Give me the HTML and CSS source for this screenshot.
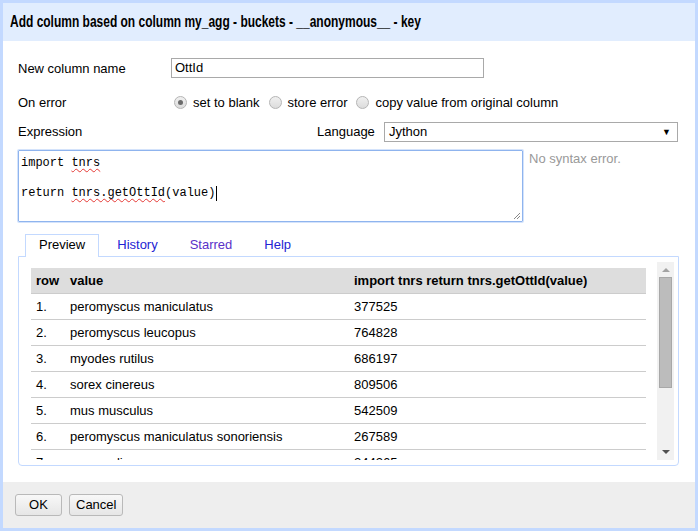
FILE: index.html
```html
<!DOCTYPE html>
<html>
<head>
<meta charset="utf-8">
<link rel="stylesheet" href="styles.css">
</head>
<body>
<div class="dialog">
  <div class="header"><span class="title">Add column based on column my_agg - buckets - __anonymous__ - key</span></div>
  <div class="body">
    <div class="row row-name">
      <div class="label">New column name</div>
      <div class="input">OttId</div>
    </div>
    <div class="row row-error">
      <div class="label">On error</div>
      <div class="radios">
        <span class="radio checked"></span><span class="rtext">set to blank</span>
        <span class="radio"></span><span class="rtext">store error</span>
        <span class="radio"></span><span class="rtext">copy value from original column</span>
      </div>
    </div>
    <div class="row row-expr">
      <div class="label">Expression</div>
      <div class="lang-label">Language</div>
      <div class="select"><span>Jython</span><span class="arrow">&#9660;</span></div>
    </div>
    <div class="row row-code">
      <div class="code">
        <div class="line">import <span class="sp">tnrs</span></div>
        <div class="line">&nbsp;</div>
        <div class="line">return <span class="sp">tnrs.getOttId</span>(value)<span class="caret"></span></div>
        <svg class="grip" width="9" height="9" viewBox="0 0 9 9"><path d="M8 2 L2 8 M8 5 L5 8" stroke="#888" stroke-width="1"/></svg>
      </div>
      <div class="status">No syntax error.</div>
    </div>
    <div class="tabs">
      <div class="tab active">Preview</div>
      <div class="tab link">History</div>
      <div class="tab visited">Starred</div>
      <div class="tab link">Help</div>
    </div>
    <div class="panel">
      <div class="scroller">
        <div class="content">
          <table class="preview">
            <thead>
              <tr><th class="c1">row</th><th class="c2">value</th><th>import tnrs return tnrs.getOttId(value)</th></tr>
            </thead>
            <tbody>
              <tr><td>1.</td><td>peromyscus maniculatus</td><td>377525</td></tr>
              <tr><td>2.</td><td>peromyscus leucopus</td><td>764828</td></tr>
              <tr><td>3.</td><td>myodes rutilus</td><td>686197</td></tr>
              <tr><td>4.</td><td>sorex cinereus</td><td>809506</td></tr>
              <tr><td>5.</td><td>mus musculus</td><td>542509</td></tr>
              <tr><td>6.</td><td>peromyscus maniculatus sonoriensis</td><td>267589</td></tr>
              <tr><td>7.</td><td>mammalia</td><td>244265</td></tr>
            </tbody>
          </table>
        </div>
        <div class="sbar">
          <div class="sarrow up"></div>
          <div class="sthumb"></div>
          <div class="sarrow down"></div>
        </div>
      </div>
    </div>
  </div>
  <div class="footer">
    <div class="btn ok">OK</div>
    <div class="btn">Cancel</div>
  </div>
</div>
</body>
</html>
```
FILE: styles.css
```css
html, body {
  margin: 0;
  padding: 0;
}
body {
  font-family: "Liberation Sans", Arial, sans-serif;
  font-size: 13px;
  color: #000;
  background: #c3d9ff;
}
.dialog {
  width: 698px;
  height: 531px;
  box-sizing: border-box;
  border: 3px solid #c3d9ff;
  background: #fff;
  display: flex;
  flex-direction: column;
}
.header {
  height: 38px;
  background: #e1edfe;
  line-height: 38px;
  padding-left: 7px;
  flex: none;
  white-space: nowrap;
}
.title {
  display: inline-block;
  font-size: 17px;
  font-weight: bold;
  transform: scaleX(0.705);
  transform-origin: 0 50%;
}
.body {
  flex: 1;
  padding: 17px 16px 0 15px;
}
.row {
  display: flex;
  align-items: center;
}
.label {
  width: 153px;
  flex: none;
}
.row-name {
  height: 20px;
}
.input {
  width: 313px;
  height: 20px;
  box-sizing: border-box;
  border: 1px solid #a9a9a9;
  padding-left: 3px;
  line-height: 18px;
}
.row-error {
  margin-top: 14px;
  height: 20px;
}
.radios {
  display: flex;
  align-items: center;
}
.radio {
  width: 11px;
  height: 11px;
  border-radius: 50%;
  border: 1px solid #b5b5b5;
  background: linear-gradient(#f0f0f0, #dcdcdc);
  margin: 0 6px 0 3px;
  display: flex;
  align-items: center;
  justify-content: center;
  box-sizing: content-box;
}
.radio.checked::after {
  content: "";
  width: 5px;
  height: 5px;
  border-radius: 50%;
  background: #6b6b6b;
}
.rtext {
  margin-right: 6px;
}
.row-expr {
  margin-top: 10px;
  height: 19px;
}
.lang-label {
  margin-left: 146px;
  width: 67px;
}
.select {
  width: 294px;
  height: 20px;
  box-sizing: border-box;
  border: 1px solid #a9a9a9;
  display: flex;
  align-items: center;
  justify-content: space-between;
  padding: 0 6px 0 4px;
}
.arrow {
  font-size: 9px;
}
.row-code {
  margin-top: 9px;
  align-items: flex-start;
}
.code {
  width: 505px;
  height: 72px;
  box-sizing: border-box;
  border: 1px solid #8fb4ee;
  box-shadow: 0 0 0 1px #d4e3fb;
  border-radius: 1px;
  padding: 5px 2px 2px;
  font-family: "Liberation Mono", "DejaVu Sans Mono", monospace;
  font-size: 12px;
  line-height: 15px;
  position: relative;
}
.sp {
  text-decoration: underline wavy #e53935;
  text-decoration-thickness: 1px;
  text-underline-offset: 2px;
}
.caret {
  display: inline-block;
  width: 1px;
  height: 15px;
  background: #000;
  vertical-align: top;
  margin-left: 1px;
}
.grip {
  position: absolute;
  right: 1px;
  bottom: 1px;
}
.status {
  margin-left: 6px;
  margin-top: 1px;
  color: #999;
}
.tabs {
  display: flex;
  margin-top: 12px;
  padding-left: 7px;
  height: 22px;
  position: relative;
  z-index: 1;
}
.tab {
  padding: 0 13px;
  margin-right: 4px;
  line-height: 20px;
  height: 22px;
  box-sizing: border-box;
  border: 1px solid transparent;
  border-bottom: none;
}
.tab.active {
  border-color: #c3d9ff;
  background: #fff;
  height: 23px;
}
.tab.link {
  color: #2323d3;
}
.tab.visited {
  color: #5a31c8;
}
.panel {
  width: 661px;
  height: 210px;
  box-sizing: border-box;
  border: 1px solid #c3d9ff;
  border-radius: 0 0 4px 4px;
  padding: 5px 4px 5px 6px;
}
.scroller {
  display: flex;
  height: 198px;
}
.content {
  flex: 1;
  overflow: hidden;
  padding: 6px 0 0 6px;
}
.preview {
  width: 615px;
  border-collapse: collapse;
}
.preview th, .preview td {
  text-align: left;
  padding: 0 5px;
  height: 25px;
  border-bottom: 1px solid #ccc;
  white-space: nowrap;
}
.preview th {
  background: #ddd;
  font-weight: bold;
}
.c1 { width: 24px; }
.c2 { width: 274px; }
.sbar {
  width: 17px;
  background: #f1f1f1;
  display: flex;
  flex-direction: column;
  align-items: center;
  flex: none;
}
.sarrow {
  width: 0;
  height: 0;
  border-left: 4px solid transparent;
  border-right: 4px solid transparent;
  margin: 6px 0 5px;
}
.sarrow.up {
  border-bottom: 4px solid #a3a3a3;
}
.sarrow.down {
  border-top: 4px solid #505050;
  margin-top: auto;
  margin-bottom: 6px;
}
.sthumb {
  width: 11px;
  height: 109px;
  background: #bcbcbc;
  border: 1px solid #a8a8a8;
}
.footer {
  height: 46px;
  background: #eee;
  flex: none;
  display: flex;
  align-items: flex-start;
  padding: 12px 0 0 12px;
  box-sizing: border-box;
  gap: 7px;
}
.btn {
  height: 22px;
  box-sizing: border-box;
  border: 1px solid #b9b9b9;
  border-radius: 3px;
  background: linear-gradient(#f8f8f8, #e6e6e6);
  padding: 0 6px;
  line-height: 20px;
  font-size: 13px;
}
.btn.ok {
  width: 47px;
  text-align: center;
  padding: 0;
}
```
